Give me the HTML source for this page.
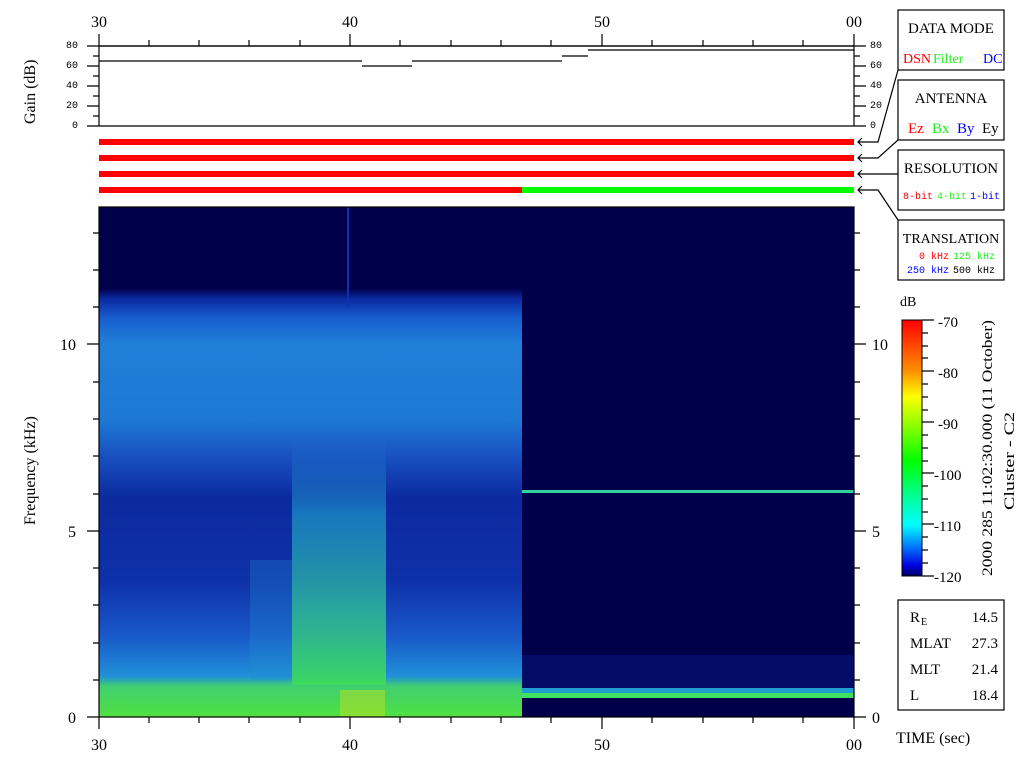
<!DOCTYPE html>
<html><head><meta charset="utf-8"><style>
body{margin:0;width:1024px;height:768px;background:#fff;overflow:hidden;font-family:"Liberation Mono","DejaVu Sans Mono",monospace}
</style></head><body>
<svg width="1024" height="768" xmlns="http://www.w3.org/2000/svg" style="position:absolute;left:0;top:0">
<defs>
<linearGradient id="lv" x1="0" y1="0" x2="0" y2="1">
<stop offset="0" stop-color="#00004a"/>
<stop offset="0.16" stop-color="#00004a"/>
<stop offset="0.18" stop-color="#0a2aa0"/>
<stop offset="0.22" stop-color="#1860d0"/>
<stop offset="0.27" stop-color="#2080d8"/>
<stop offset="0.42" stop-color="#1e78d4"/>
<stop offset="0.49" stop-color="#1850c0"/>
<stop offset="0.57" stop-color="#0c2aa0"/>
<stop offset="0.73" stop-color="#0e30a8"/>
<stop offset="0.84" stop-color="#1858c8"/>
<stop offset="0.92" stop-color="#2090d8"/>
<stop offset="0.94" stop-color="#40d070"/>
<stop offset="1" stop-color="#50e040"/>
</linearGradient>
<linearGradient id="col" x1="0" y1="0" x2="0" y2="1">
<stop offset="0" stop-color="#2090d8" stop-opacity="0"/>
<stop offset="0.3" stop-color="#20a8d0" stop-opacity="0.6"/>
<stop offset="0.7" stop-color="#30c890" stop-opacity="0.75"/>
<stop offset="1" stop-color="#40e050" stop-opacity="0.85"/>
</linearGradient>
<linearGradient id="cb" x1="0" y1="0" x2="0" y2="1">
<stop offset="0" stop-color="#ff0000"/>
<stop offset="0.2" stop-color="#ff9000"/>
<stop offset="0.3" stop-color="#ffff00"/>
<stop offset="0.55" stop-color="#00ff00"/>
<stop offset="0.7" stop-color="#00ffa0"/>
<stop offset="0.8" stop-color="#00ffff"/>
<stop offset="0.88" stop-color="#0080ff"/>
<stop offset="0.96" stop-color="#0000e0"/>
<stop offset="1" stop-color="#000060"/>
</linearGradient>
</defs>
<rect x="99" y="207" width="755" height="510" fill="#00004a"/>
<rect x="99" y="207" width="423" height="510" fill="url(#lv)"/>
<rect x="292" y="440" width="94" height="245" fill="url(#col)"/>
<rect x="250" y="560" width="42" height="120" fill="#2090d0" opacity="0.3"/>
<rect x="340" y="690" width="45" height="27" fill="#c0e020" opacity="0.5"/>
<rect x="347" y="207" width="2" height="100" fill="#1030b0"/>
<rect x="522" y="490" width="332" height="3" fill="#30d0a0"/>
<rect x="522" y="655" width="332" height="33" fill="#030c66"/>
<rect x="522" y="688" width="332" height="5" fill="#20a0d0"/>
<rect x="522" y="693" width="332" height="5" fill="#40e060"/>
<g stroke="#000" stroke-width="1.2" fill="none">
<rect x="99" y="207" width="755" height="510"/>
<line x1="99" y1="46" x2="854" y2="46"/>
<line x1="99" y1="126" x2="854" y2="126"/>
<line x1="99" y1="34" x2="99" y2="126"/><line x1="854" y1="34" x2="854" y2="126"/>
<line x1="350" y1="34" x2="350" y2="46"/><line x1="602" y1="34" x2="602" y2="46"/>
<path d="M149 40V46M199 40V46M249 40V46M300 40V46M400 40V46M451 40V46M501 40V46M551 40V46M652 40V46M703 40V46M753 40V46M803 40V46"/>
<path d="M87 46H99M93 56H99M87 66H99M93 76H99M87 86H99M93 96H99M87 106H99M93 116H99M87 126H99"/>
<path d="M854 46H866M854 56H860M854 66H866M854 76H860M854 86H866M854 96H860M854 106H866M854 116H860M854 126H866"/>
<path d="M99 61H362M362 66H412M412 61H562M562 56H588M588 50H854M99 46H854"/>
<path d="M87 717H99M93 680H99M93 643H99M93 605H99M93 568H99M87 531H99M93 494H99M93 456H99M93 419H99M93 382H99M87 344H99M93 307H99M93 270H99M93 233H99"/>
<path d="M854 717H866M854 680H860M854 643H860M854 605H860M854 568H860M854 531H866M854 494H860M854 456H860M854 419H860M854 382H860M854 344H866M854 307H860M854 270H860M854 233H860"/>
<path d="M99 717V729M350 717V729M602 717V729M854 717V729M149 717V723M199 717V723M249 717V723M300 717V723M400 717V723M451 717V723M501 717V723M551 717V723M652 717V723M703 717V723M753 717V723M803 717V723"/>
<rect x="898" y="10" width="106" height="60"/>
<rect x="898" y="80" width="106" height="60"/>
<rect x="898" y="150" width="106" height="60"/>
<rect x="898" y="220" width="106" height="60"/>
<rect x="898" y="600" width="106" height="110"/>
<path d="M898 70L878 142H858M862 138L858 142L862 146"/>
<path d="M898 140L878 158H858M862 154L858 158L862 162"/>
<path d="M898 174H858M862 170L858 174L862 178"/>
<path d="M898 220L878 190H858M862 186L858 190L862 194"/>
<path d="M922 320H934M922 371H934M922 422H934M922 473H934M922 524H934M922 576H934M922 333H928M922 346H928M922 358H928M922 384H928M922 397H928M922 410H928M922 435H928M922 448H928M922 461H928M922 486H928M922 499H928M922 512H928M922 537H928M922 550H928M922 563H928"/>
</g>
<rect x="99" y="139" width="755" height="6" fill="#ff0000"/>
<rect x="99" y="155" width="755" height="6" fill="#ff0000"/>
<rect x="99" y="171" width="755" height="6" fill="#ff0000"/>
<rect x="99" y="187" width="423" height="6" fill="#ff0000"/>
<rect x="522" y="187" width="332" height="6" fill="#00ff00"/>
<rect x="902" y="320" width="20" height="256" fill="url(#cb)" stroke="#000"/>
<g font-family="Liberation Serif,serif" font-size="16" fill="#000">
<text x="99" y="27" text-anchor="middle">30</text><text x="350" y="27" text-anchor="middle">40</text><text x="602" y="27" text-anchor="middle">50</text><text x="854" y="27" text-anchor="middle">00</text>
<text x="99" y="750" text-anchor="middle">30</text><text x="350" y="750" text-anchor="middle">40</text><text x="602" y="750" text-anchor="middle">50</text><text x="854" y="750" text-anchor="middle">00</text>
<text x="76" y="723" text-anchor="end">0</text><text x="76" y="537" text-anchor="end">5</text><text x="76" y="350" text-anchor="end">10</text>
<text x="872" y="723">0</text><text x="872" y="537">5</text><text x="872" y="350">10</text>
<text transform="translate(35,124) rotate(-90)">Gain (dB)</text>
<text transform="translate(35,525) rotate(-90)">Frequency (kHz)</text>
<text x="896" y="743">TIME (sec)</text>
<text x="900" y="306" font-size="14">dB</text>
<g font-size="15"><text x="938" y="327">-70</text><text x="938" y="378">-80</text><text x="938" y="429">-90</text><text x="934" y="480">-100</text><text x="934" y="531">-110</text><text x="934" y="582">-120</text></g>
<text transform="translate(992,576) rotate(-90)" font-size="15" textLength="256" lengthAdjust="spacingAndGlyphs">2000 285 11:02:30.000 (11 October)</text>
<text transform="translate(1014,510) rotate(-90)" font-size="15" textLength="98" lengthAdjust="spacingAndGlyphs">Cluster - C2</text>
<g font-size="15"><text x="951" y="33" text-anchor="middle">DATA MODE</text><text x="951" y="103" text-anchor="middle">ANTENNA</text><text x="951" y="173" text-anchor="middle">RESOLUTION</text><text x="951" y="243" text-anchor="middle" font-size="14">TRANSLATION</text>
<text x="903" y="63" fill="#f00" font-size="14">DSN</text><text x="933" y="63" style="fill:#22ee22" font-size="14">Filter</text><text x="983" y="63" fill="#00f" font-size="14">DC</text>
<text x="908" y="133" fill="#f00">Ez</text><text x="932" y="133" style="fill:#22ee22">Bx</text><text x="957" y="133" fill="#00f">By</text><text x="982" y="133">Ey</text>
<text x="910" y="622">R</text><text x="921" y="625" font-size="10">E</text><text x="998" y="622" text-anchor="end">14.5</text>
<text x="910" y="648">MLAT</text><text x="998" y="648" text-anchor="end">27.3</text>
<text x="910" y="674">MLT</text><text x="998" y="674" text-anchor="end">21.4</text>
<text x="910" y="700">L</text><text x="998" y="700" text-anchor="end">18.4</text></g>
</g>
<g font-family="Liberation Mono,monospace" font-size="10" fill="#000">
<text x="78" y="48" text-anchor="end">80</text><text x="78" y="68" text-anchor="end">60</text><text x="78" y="88" text-anchor="end">40</text><text x="78" y="108" text-anchor="end">20</text><text x="78" y="128" text-anchor="end">0</text>
<text x="870" y="48">80</text><text x="870" y="68">60</text><text x="870" y="88">40</text><text x="870" y="108">20</text><text x="870" y="128">0</text>
<text x="903" y="199" fill="#f00">8-bit</text><text x="937" y="199" style="fill:#22ee22">4-bit</text><text x="970" y="199" fill="#00f">1-bit</text>
<text x="919" y="259" fill="#f00">0 kHz</text><text x="953" y="259" style="fill:#22ee22">125 kHz</text>
<text x="907" y="273" fill="#00f">250 kHz</text><text x="953" y="273">500 kHz</text>
</g>
</svg>
</body></html>
